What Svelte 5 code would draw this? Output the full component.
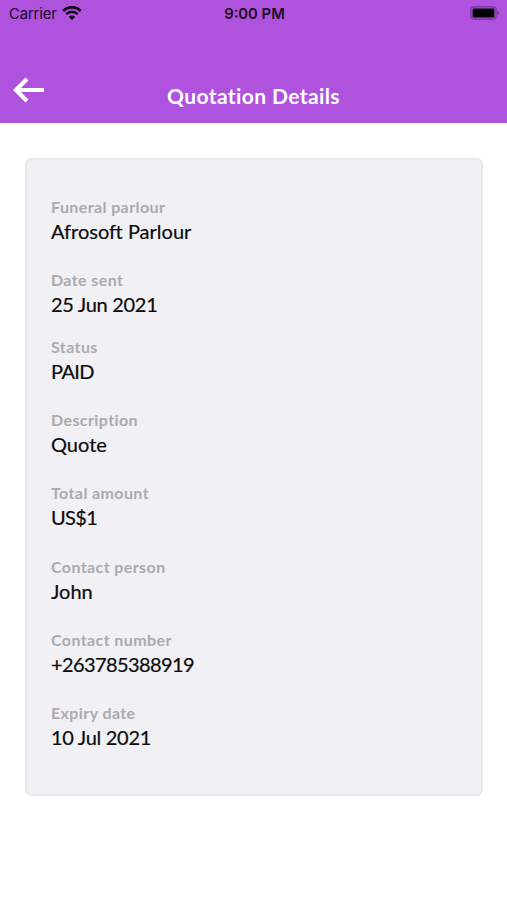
<script lang="ts">
  interface Field {
    label: string;
    value: string;
    kind?: string;
  }

  const fields: Field[] = [
    { label: 'Funeral parlour', value: 'Afrosoft Parlour' },
    { label: 'Date sent', value: '25 Jun 2021', kind: 'date tight' },
    { label: 'Status', value: 'PAID', kind: 'caps' },
    { label: 'Description', value: 'Quote' },
    { label: 'Total amount', value: 'US$1', kind: 'caps' },
    { label: 'Contact person', value: 'John' },
    { label: 'Contact number', value: '+263785388919', kind: 'phone' },
    { label: 'Expiry date', value: '10 Jul 2021', kind: 'date' },
  ];
</script>

<div class="screen">
  <header>
    <div class="status-bar">
      <div class="carrier">
        <span>Carrier</span>
        <svg width="20" height="14" viewBox="0 0 20 14" fill="none" stroke="#110719">
          <path d="M1.2 4.9a12.4 12.4 0 0 1 17.6 0" stroke-width="2.8" />
          <path d="M4.3 8.2a8 8 0 0 1 11.4 0" stroke-width="2.6" />
          <path d="M10 14 6.9 10.9a4.4 4.4 0 0 1 6.2 0z" fill="#110719" stroke="none" />
        </svg>
      </div>
      <div class="time">9:00 PM</div>
      <div class="battery">
        <svg width="30" height="14" viewBox="0 0 30 14">
          <rect x="0.9" y="0.9" width="25.2" height="12.2" rx="3.4" fill="none" stroke="#6f3391" stroke-width="1.1" />
          <rect x="2.6" y="2.6" width="21.8" height="8.8" rx="1.2" fill="#000" />
          <path d="M27.4 4.8v4.4c1-.4 1.6-1.2 1.6-2.2s-.6-1.8-1.6-2.2z" fill="#6f3391" />
        </svg>
      </div>
    </div>
    <div class="nav-bar">
      <button aria-label="Back">
        <svg width="32" height="26" viewBox="0 0 32 26" fill="none" stroke="#fff" stroke-width="4.2">
          <path d="M15 2 4 13l11 11M4 13h28" />
        </svg>
      </button>
      <h1>Quotation Details</h1>
    </div>
  </header>

  <main>
    <dl class="card">
      {#each fields as field}
        <div class="field {field.kind ?? ''}">
          <dt>{field.label}</dt>
          <dd>{field.value}</dd>
        </div>
      {/each}
    </dl>
  </main>
</div>

<style>
  :global(body) {
    margin: 0;
    background: #fff;
  }

  .screen {
    height: 900px;
    overflow: hidden;
    background: #fff;
    font-family: Lato, sans-serif;
  }

  header {
    height: 123px;
    background: #af52de;
  }

  .status-bar {
    display: grid;
    grid-template-columns: 1fr auto 1fr;
    align-items: center;
    height: 27px;
    padding: 0 7px 0 9px;
    font-family: Inter, sans-serif;
    font-size: 14.8px;
    color: #1a0a24;
  }

  .carrier {
    display: flex;
    align-items: center;
    gap: 5px;
  }

  .carrier span {
    letter-spacing: -0.1px;
  }

  .carrier svg {
    margin-top: -2px;
  }

  .time {
    font-weight: 600;
  }

  .battery {
    display: flex;
    justify-content: flex-end;
    margin-top: -1px;
  }

  .nav-bar {
    display: grid;
    grid-template-columns: 1fr auto 1fr;
    align-items: center;
    height: 28px;
    padding: 55px 12px 0;
  }

  button {
    display: flex;
    width: 32px;
    margin-top: -12px;
    padding: 0;
    border: 0;
    background: none;
  }

  h1 {
    margin: 0;
    font-size: 21px;
    font-weight: 700;
    line-height: 28px;
    letter-spacing: 0.4px;
    color: #fff;
  }

  main {
    padding: 35px 24px 0 25px;
  }

  .card {
    box-sizing: border-box;
    height: 638px;
    margin: 0;
    padding: 34.6px 24px;
    border: 2px solid #e9e9eb;
    border-radius: 6px;
    background: #f1f0f5;
  }

  .field {
    height: 73.3px;
  }

  .tight {
    height: 67px;
  }

  dt {
    font-size: 16px;
    font-weight: 700;
    line-height: 23px;
    letter-spacing: 0.4px;
    color: #ababad;
  }

  dd {
    margin: 0;
    font-size: 20px;
    line-height: 26px;
    letter-spacing: 0;
    color: #0b0b0c;
    -webkit-text-stroke: 0.2px #0b0b0c;
  }

  .caps dd {
    letter-spacing: -0.6px;
  }

  .date dd {
    letter-spacing: -0.3px;
  }

  .phone dd {
    letter-spacing: -0.6px;
  }
</style>
